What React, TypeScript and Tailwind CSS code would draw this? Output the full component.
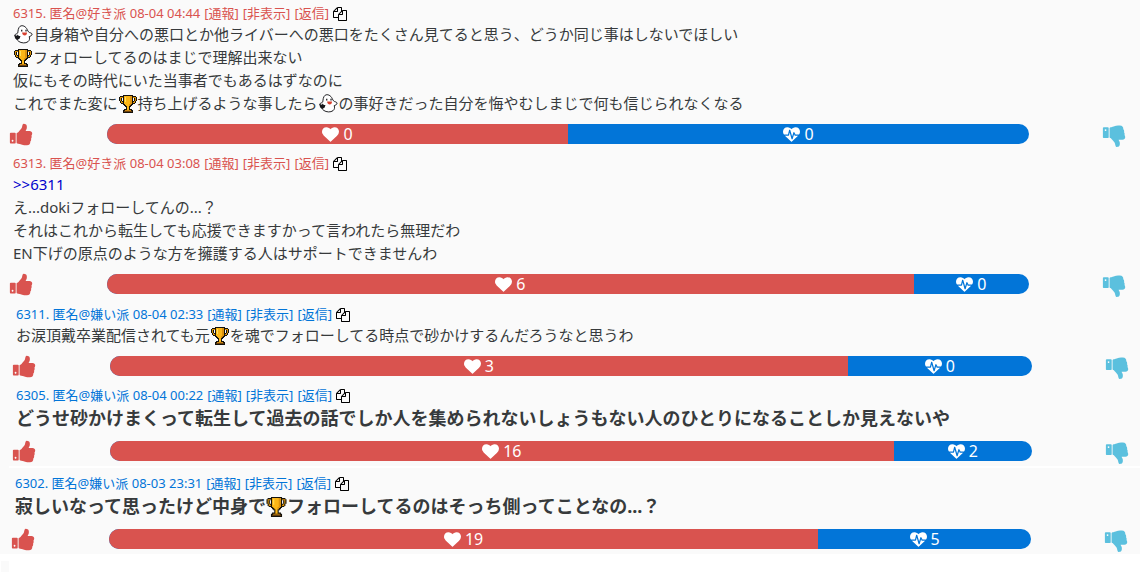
import type { ReactNode } from "react"

type Side = "like" | "dislike"

type Post = {
    id: number
    side: Side
    date: string
    good: number
    bad: number
    big?: boolean
    body: ReactNode
}

const ICONS = {
    thumbsUp:
        "M320 1344q0-26-19-45t-45-19q-27 0-45.500 19t-18.500 45q0 27 18.500 45.500t45.500 18.500q26 0 45-18.500t19-45.500zm160-512v640q0 26-19 45t-45 19h-288q-26 0-45-19t-19-45v-640q0-26 19-45t45-19h288q26 0 45 19t19 45zm1184 0q0 86-55 149 15 44 15 76 3 76-43 137 17 56 0 117-15 57-54 94 9 112-49 181-64 76-197 78h-129q-66 0-144-15.500t-121.500-29-120.500-39.500q-123-43-158-44-26-1-45-19.500t-19-44.500v-641q0-25 18-43.500t43-20.500q24-2 76-59t101-121q68-87 101-120 18-18 31-48t17.500-48.500 13.500-60.500q7-39 12.500-61t19.500-52 34-50q19-19 45-19 46 0 82.500 10.500t60 26 40 40.500 24 45 12 50 5 45 .5 39q0 38-9.500 76t-19 60-27.500 56q-3 6-10 18t-11 22-8 24h277q78 0 135 57t57 135z",
    thumbsDown:
        "M320 576q0 26-19 45t-45 19q-27 0-45.500-19t-18.500-45q0-27 18.500-45.500t45.500-18.500q26 0 45 18.500t19 45.500zm160 512v-640q0-26-19-45t-45-19h-288q-26 0-45 19t-19 45v640q0 26 19 45t45 19h288q26 0 45-19t19-45zm1129-149q55 61 55 149-1 78-57.500 135t-134.500 57h-277q4 14 8 24t11 22 10 18q18 37 27 57t19 58.500 10 76.500q0 24-.5 39t-5 45-12 50-24 45-40 40.500-60 26-82.500 10.500q-26 0-45-19-20-20-34-50t-19.500-52-12.500-61q-9-42-13.500-60.500t-17.500-48.500-31-48q-33-33-101-120-49-64-101-121t-76-59q-25-2-43-20.500t-18-43.500v-641q0-26 19-44.500t45-19.500q35-1 158-44 77-26 120.500-39.500t121.500-29 144-15.500h129q133 2 197 78 58 69 49 181 39 37 54 94 17 61 0 117 46 61 43 137 0 32-15 76z",
    copy: "M1696 384q40 0 68 28t28 68v1216q0 40-28 68t-68 28h-960q-40 0-68-28t-28-68v-288h-544q-40 0-68-28t-28-68v-672q0-40 20-88t48-76l408-408q28-28 76-48t88-20h416q40 0 68 28t28 68v328q68-40 128-40h416zm-544 213l-299 299h299v-299zm-640-384l-299 299h299v-299zm196 647l316-316v-416h-384v416q0 40-28 68t-68 28h-416v640h512v-256q0-40 20-88t48-76zm956 804v-1152h-384v416q0 40-28 68t-68 28h-416v640h896z",
    heart: "M896 1664q-26 0-44-18l-624-602q-10-8-27.500-26t-55.500-65.500-68-97.500-53.500-121-23.500-138q0-220 127-344t351-124q62 0 126.500 21.500t120 58 95.500 68.500 76 68q36-36 76-68t95.500-68.500 120-58 126.500-21.500q224 0 351 124t127 344q0 221-229 450l-623 600q-18 18-44 18z",
    heartbeat:
        "M1280 1024h305q-5 6-10 10.500t-9 7.500l-3 4-623 600q-18 18-44 18t-44-18l-624-602q-5-2-21-20h369q22 0 39.500-13.500t22.500-34.500l70-281 190 667q6 20 23 33t39 13q21 0 38-13t23-33l146-485 56 112q18 35 57 35zm512-428q0 145-103 300h-369l-111-221q-8-17-25.500-27t-36.500-8q-45 5-56 46l-129 430-196-686q-6-20-23.500-33t-39.500-13-39 13.500-22 34.500l-116 464h-423q-103-155-103-300 0-220 127-344t351-124q62 0 126.500 21.500t120 58 95.500 68.500 76 68q36-36 76-68t95.500-68.500 120-58 126.500-21.500q224 0 351 124t127 344z",
}

function Icon({ name, className }: { name: keyof typeof ICONS; className: string }) {
    return (
        <svg viewBox="0 0 1792 1792" fill="currentColor" aria-hidden="true" className={className}>
            <path d={ICONS[name]} />
        </svg>
    )
}

function Trophy({ big }: { big?: boolean }) {
    return (
        <svg
            viewBox="0 0 18 18"
            aria-hidden="true"
            className={
                big ? "inline-block h-5 w-[21px] align-[-4px]" : "mx-px inline-block size-[18px] align-[-4px]"
            }
        >
            {/* outline */}
            <path
                d="M4 0h10v1h3v1h1v4h-1v2h-1v1h-2v1h-1v1h-1v1h-1v2h2v1h1v3H4v-3h1v-1h2v-2H6v-1H5v-1H4V9H2V8H1V6H0V2h1V1h3z"
                fill="#15120c"
            />
            {/* handles */}
            <path d="M1 2h3v1H2v3h1v1h1v1H2V6H1zM17 2h-3v1h2v3h-1v1h-1v1h2V6h1z" fill="#d9930a" />
            <path d="M3 3h1v3H3zM14 3h1v3h-1z" fill="#fafafa" />
            {/* cup, stem and base */}
            <path d="M5 1h8v8h-1v1h-1v1h-1v4H8v-4H7v-1H6V9H5z" fill="#fcb616" />
            <path d="M6 2h1v5H6z" fill="#ffdf5c" />
            <path d="M11 1h2v8h-1v1h-1v1h-1V9h1z" fill="#dd920c" />
            <path d="M6 15h6v1H6z" fill="#c98410" />
            <path d="M5 16h8v1H5z" fill="#6b410d" />
        </svg>
    )
}

function Ghost() {
    return (
        <svg viewBox="0 0 20 20" aria-hidden="true" className="mx-px inline-block size-[19px] align-[-4px]">
            <path
                d="M6.500 1.300C9-.2 12.500 1.500 14 5c.8 1.800 1.500 3 3.500 3.300 1.800.5 2 2.200.5 3-.8.500-1.500.7-2 1 .8 2 .3 4-1.200 5.200-2.500 2-7 1.700-9.800-.2C3.500 16 2.500 14.800 2.500 13 .5 12.500.3 10.500 1.500 9.800c1-.5 2-.8 2.500-1.500C4.300 6 4.300 3 6.500 1.300z"
                fill="#fff"
                stroke="#17171a"
                strokeWidth="1"
            />
            <path d="M7.500 5h1.300v1.800H7.500zM12 5h1.300v1.800H12z" fill="#17171a" />
            <path d="M8.500 8h5.200c0 2-1 3-2.400 3S8.700 10 8.500 8z" fill="#d8402f" />
            <path d="M.8 10.500l2.200.8 1-1.300 1 1.500 1.800.2-.8 2.600-2.500 1.500L1 14z" fill="#17171a" />
        </svg>
    )
}

const SCREENS: { className: string; posts: Post[] }[] = [
    {
        className: "pt-[5px] pr-[15px] pb-[7px] pl-[11px]",
        posts: [
            {
                id: 6315,
                side: "like",
                date: "08-04 04:44",
                good: 0,
                bad: 0,
                body: (
                    <>
                        <Ghost />自身箱や自分への悪口とか他ライバーへの悪口をたくさん見てると思う、どうか同じ事はしないでほしい
                        <br />
                        <Trophy />フォローしてるのはまじで理解出来ない
                        <br />
                        仮にもその時代にいた当事者でもあるはずなのに
                        <br />
                        これでまた変に<Trophy />持ち上げるような事したら<Ghost />の事好きだった自分を悔やむしまじで何も信じられなくなる
                    </>
                ),
            },
            {
                id: 6313,
                side: "like",
                date: "08-04 03:08",
                good: 6,
                bad: 0,
                body: (
                    <>
                        <a href="#6311" className="text-[#0000cc]">&gt;&gt;6311</a>
                        <br />
                        え...dokiフォローしてんの...？
                        <br />
                        それはこれから転生しても応援できますかって言われたら無理だわ
                        <br />
                        EN下げの原点のような方を擁護する人はサポートできませんわ
                    </>
                ),
            },
        ],
    },
    {
        className: "pt-[5px] pr-3 pb-[5px] pl-[14px]",
        posts: [
            {
                id: 6311,
                side: "dislike",
                date: "08-04 02:33",
                good: 3,
                bad: 0,
                body: (
                    <>
                        お涙頂戴卒業配信されても元<Trophy />を魂でフォローしてる時点で砂かけするんだろうなと思うわ
                    </>
                ),
            },
            {
                id: 6305,
                side: "dislike",
                date: "08-04 00:22",
                good: 16,
                bad: 2,
                big: true,
                body: "どうせ砂かけまくって転生して過去の話でしか人を集められないしょうもない人のひとりになることしか見えないや",
            },
        ],
    },
    {
        className: "pt-[7px] pr-[13px] pb-[5px] pl-[13px]",
        posts: [
            {
                id: 6302,
                side: "dislike",
                date: "08-03 23:31",
                good: 19,
                bad: 5,
                big: true,
                body: (
                    <>
                        寂しいなって思ったけど中身で<Trophy big />フォローしてるのはそっち側ってことなの...？
                    </>
                ),
            },
        ],
    },
]

function VoteBar({ good, bad }: { good: number; bad: number }) {
    // one vote is added to each side so that neither part is ever empty
    const share = ((good + 1) / (good + bad + 2)) * 100
    return (
        <div className="flex h-5 overflow-hidden rounded-full bg-[#0275d8] text-base leading-5 text-white">
            <div className="flex items-center justify-center gap-1 bg-[#d9534f]" style={{ width: `${share}%` }}>
                <Icon name="heart" className="size-[17px]" />
                {good}
            </div>
            <div className="flex flex-1 items-center justify-center gap-1">
                <Icon name="heartbeat" className="size-[17px]" />
                {bad}
            </div>
        </div>
    )
}

function PostItem({ post }: { post: Post }) {
    const color = post.side === "like" ? "text-[#d9534f]" : "text-[#0275d8]"
    return (
        <article id={String(post.id)}>
            <header className={`flex h-[18px] items-center pl-[2px] text-[13px] ${color}`}>
                <span>
                    {post.id}. 匿名@{post.side === "like" ? "好き派" : "嫌い派"} {post.date}
                </span>
                <div className="ml-1 flex gap-1">
                    <button type="button">[通報]</button>
                    <button type="button">[非表示]</button>
                    <button type="button">[返信]</button>
                    <button type="button" aria-label="コピー" className="text-black">
                        <Icon name="copy" className="size-[14px]" />
                    </button>
                </div>
            </header>
            <p
                className={
                    post.big
                        ? "pl-[2px] text-lg leading-[27px] font-bold text-[#373a3c]"
                        : "pl-[2px] text-[15px] leading-[23px] text-[#373a3c]"
                }
            >
                {post.body}
            </p>
            <div className="mt-[9px] grid grid-cols-[96px_1fr_96px]">
                <button
                    type="button"
                    aria-label="いいね"
                    className="-ml-[2px] flex h-5 items-center justify-self-start text-[#d9534f]"
                >
                    <Icon name="thumbsUp" className="size-[25px]" />
                </button>
                <VoteBar good={post.good} bad={post.bad} />
                <button
                    type="button"
                    aria-label="よくないね"
                    className="-mr-[2px] flex h-5 items-center justify-self-end text-[#5bc0de]"
                >
                    <Icon name="thumbsDown" className="size-[25px]" />
                </button>
            </div>
        </article>
    )
}

export default function App() {
    return (
        <main lang="ja" className="bg-white font-['Noto_Sans','Noto_Sans_CJK_JP',sans-serif]">
            <div className="bg-[#fafafa]">
                {SCREENS.map((screen, i) => (
                    <div key={i}>
                        {i === 2 && <hr className="ml-[9px] h-[2px] border-0 bg-white" />}
                        <section className={`flex flex-col gap-[11px] ${screen.className}`}>
                            {screen.posts.map((post) => (
                                <PostItem key={post.id} post={post} />
                            ))}
                        </section>
                    </div>
                ))}
            </div>
            <div className="mt-[7px] ml-px h-[11px] w-2 bg-[#fafafa]" />
        </main>
    )
}
